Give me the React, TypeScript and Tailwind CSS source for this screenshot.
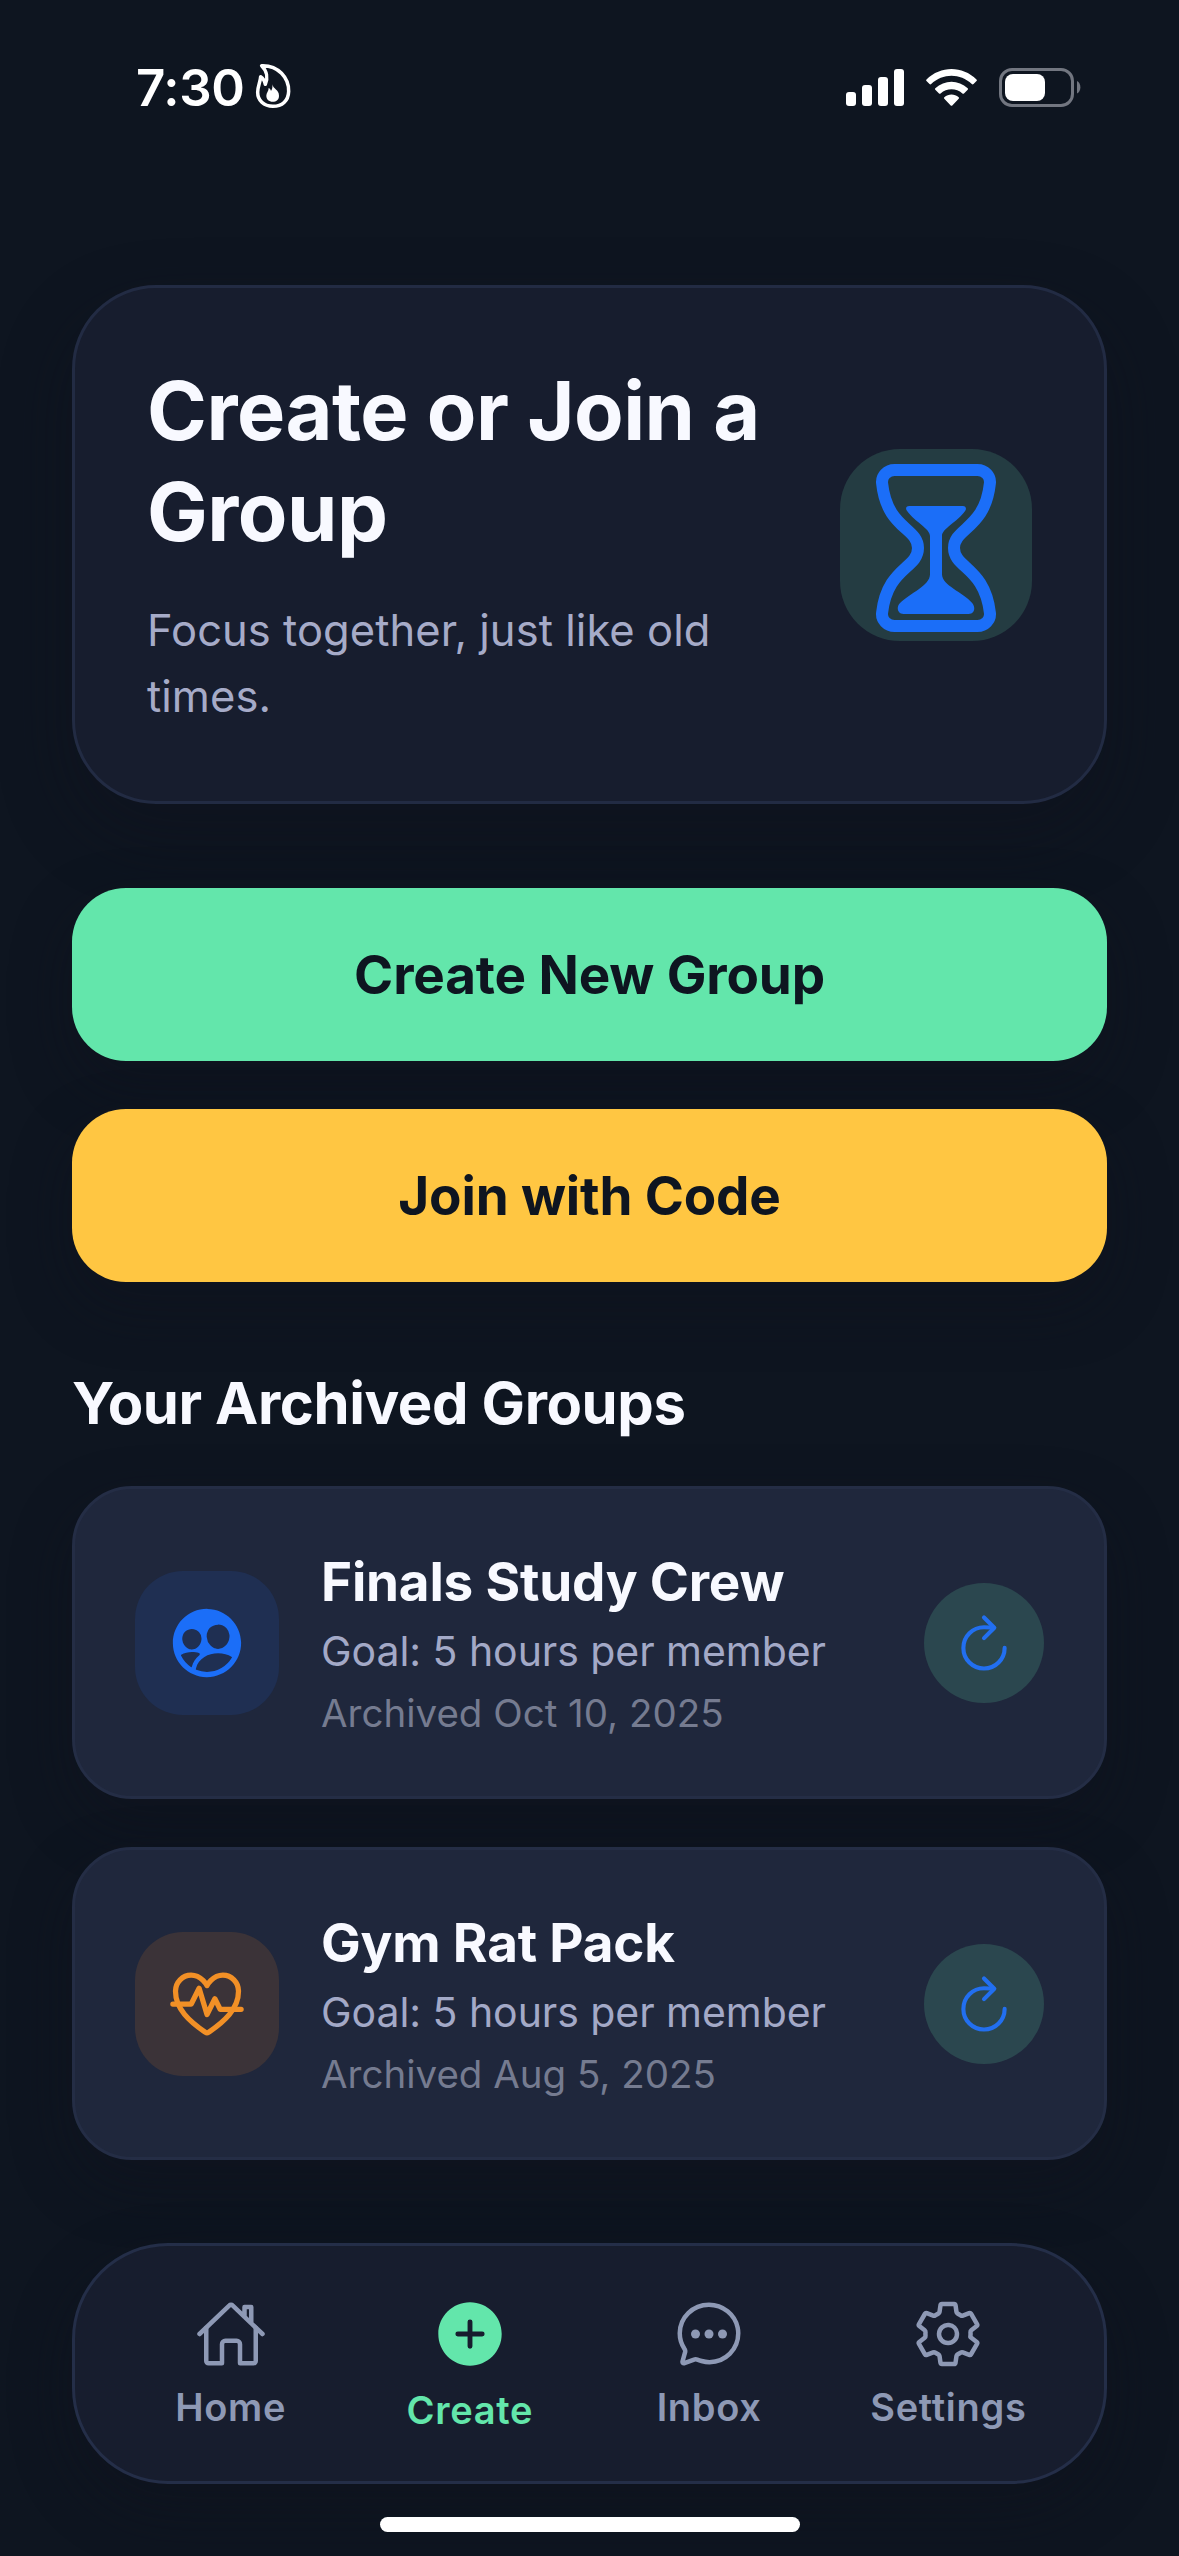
import React from 'react';
import {
  IoAddCircle,
  IoChatbubbleEllipsesOutline,
  IoFitnessOutline,
  IoHomeOutline,
  IoHourglassOutline,
  IoPeopleCircle,
  IoRefreshOutline,
  IoSettingsOutline,
} from 'react-icons/io5';

const StatusBar: React.FC = () => (
  <div className="flex h-[177px] items-start justify-between pl-[136px] pr-[98px] pt-[60px] text-white">
    <div className="flex items-start">
      <span className="text-[51px] leading-[56px] font-semibold tracking-[-0.4px]">7:30</span>
      <svg viewBox="465 70 108 138" className="ml-[11px] mt-[3px] h-[46px] w-[36px]" fill="none">
        <path
          d="M485 78 C535 76 567 115 566 155 C565 184 546 200 519 200 C491 200 473 182 473 158 C473 140 481 128 482 111 C489 115 494 124 496 134 C504 116 501 94 485 78 Z"
          stroke="currentColor"
          strokeWidth="10.5"
          strokeLinejoin="round"
        />
        <path
          d="M517 134 C519 148 537 150 537 168 C537 180 529 186 518 186 C507 186 499 179 499 168 C499 159 506 155 506 145 C510 147 512 150 513 154 C517 149 518 142 517 134 Z"
          fill="currentColor"
        />
      </svg>
    </div>
    <div className="mt-[8px] flex items-start">
      <svg viewBox="0 0 58 38" className="mt-[1px] h-[38px] w-[58px]" fill="currentColor">
        <rect x="0" y="23" width="10" height="14" rx="3" />
        <rect x="16" y="16" width="10" height="21" rx="3" />
        <rect x="32" y="8" width="10" height="29" rx="3" />
        <rect x="48" y="0" width="10" height="37" rx="3" />
      </svg>
      <svg viewBox="0 0 52 38" className="ml-[22px] mt-[1px] h-[38px] w-[52px]" fill="currentColor">
        <path d="M0.5 10.5 C14.5 -3.5 36.5 -3.5 50.5 10.5 C51 11 51 11.5 50.5 12 L47.5 15 C47 15.5 46.3 15.5 45.8 15 C34.3 4 16.7 4 5.2 15 C4.7 15.5 4 15.5 3.5 15 L0.5 12 C0 11.5 0 11 0.5 10.5 Z" />
        <path d="M9.3 19.3 C18.5 10.6 32.5 10.6 41.7 19.3 C42.2 19.8 42.2 20.3 41.7 20.8 L38 24.4 C37.5 24.9 36.9 24.9 36.4 24.4 C30.3 19 20.7 19 14.6 24.4 C14.1 24.9 13.5 24.9 13 24.4 L9.3 20.8 C8.8 20.3 8.8 19.8 9.3 19.3 Z" />
        <path d="M18.3 28.3 C22.6 24.6 28.4 24.6 32.7 28.3 C33.2 28.8 33.2 29.3 32.7 29.8 L26.3 36.4 C25.8 36.9 25.2 36.9 24.7 36.4 L18.3 29.8 C17.8 29.3 17.8 28.8 18.3 28.3 Z" />
      </svg>
      <svg viewBox="0 0 82 39" className="ml-[21px] h-[39px] w-[82px]">
        <rect x="1.5" y="1.5" width="72" height="36" rx="11.5" fill="none" stroke="#727680" strokeWidth="3" />
        <rect x="6" y="6" width="40" height="27" rx="8" fill="#fff" />
        <path d="M78 13 C82.5 15 82.5 23.5 78 25.5 Z" fill="#727680" />
      </svg>
    </div>
  </div>
);

interface GroupCardProps {
  icon: React.ReactNode;
  tileClass: string;
  name: string;
  goal: string;
  archived: string;
}

const GroupCard: React.FC<GroupCardProps> = ({ icon, tileClass, name, goal, archived }) => (
  <div className="flex h-[313px] items-center rounded-[60px] border-[3px] border-[#242d45] bg-[#1f273c] px-[60px] shadow-[0_24px_60px_rgba(16,17,28,0.45)]">
    <div className={`flex size-[144px] items-center justify-center rounded-[48px] ${tileClass}`}>{icon}</div>
    <div className="ml-[42px] flex-1 pt-[2px] whitespace-nowrap">
      <div className="text-[53px] leading-[66px] font-bold tracking-[-0.2px] text-[#f8f9ff]">{name}</div>
      <div className="mt-[9px] text-[41px] leading-[54px] tracking-[-0.05px] text-[#a3a9c7]">{goal}</div>
      <div className="mt-[10px] text-[38.5px] leading-[50px] text-[#757b90]">{archived}</div>
    </div>
    <button className="flex size-[120px] items-center justify-center rounded-full bg-[#2b474f]">
      <IoRefreshOutline className="size-[66px] text-[#226ff0]" />
    </button>
  </div>
);

interface TabProps {
  icon: React.ReactNode;
  label: string;
  active?: boolean;
}

const Tab: React.FC<TabProps> = ({ icon, label, active }) => (
  <div className={`flex flex-1 flex-col items-center ${active ? 'text-[#63e6ab]' : 'text-[#8e99b5]'}`}>
    {icon}
    <span className="mt-[13px] text-[38px] leading-[48px] font-semibold tracking-[0.7px]">{label}</span>
  </div>
);

const App: React.FC = () => {
  return (
    <div className="flex h-[2556px] w-[1179px] flex-col overflow-hidden bg-[#0e1520] font-['Inter','Liberation_Sans',sans-serif]">
      <StatusBar />

      <main className="mt-[108px] flex flex-col px-[72px]">
        {/* Hero */}
        <section className="flex h-[519px] items-center justify-between rounded-[84px] border-[3px] border-[#222b43] bg-[#171d2e] px-[72px] shadow-[0_30px_70px_rgba(16,17,28,0.45)]">
          <div className="whitespace-nowrap">
            <h1 className="text-[81px] leading-[101px] font-bold tracking-[-0.5px] text-[#f8f9ff]">
              Create or Join a
              <br />
              Group
            </h1>
            <p className="mt-[34px] text-[43.5px] leading-[66px] tracking-[0.05px] text-[#a6abc8]">
              Focus together, just like old
              <br />
              times.
            </p>
          </div>
          <div className="flex size-[192px] items-center justify-center rounded-[60px] bg-[#243c42]">
            <IoHourglassOutline className="mt-[6px] size-[192px] shrink-0 text-[#1b6ef8]" />
          </div>
        </section>

        {/* Actions */}
        <div className="mt-[84px] flex flex-col gap-[48px] text-[53px] font-bold tracking-[-0.15px] text-[#0e1520]">
          <button className="h-[173px] rounded-[54px] bg-[#63e6ab] pt-[2px] shadow-[0_24px_60px_rgba(16,17,28,0.45)]">Create New Group</button>
          <button className="h-[173px] rounded-[54px] bg-[#ffc642] pt-[2px] shadow-[0_24px_60px_rgba(16,17,28,0.45)]">Join with Code</button>
        </div>

        {/* Archived groups */}
        <h2 className="mt-[85px] text-[58px] leading-[72px] font-bold tracking-[-0.4px] text-[#f8f9ff]">Your Archived Groups</h2>
        <div className="mt-[47px] flex flex-col gap-[48px]">
          <GroupCard
            icon={<IoPeopleCircle className="size-[84px] text-[#1b6ef8]" />}
            tileClass="bg-[#1f2f52]"
            name="Finals Study Crew"
            goal="Goal: 5 hours per member"
            archived="Archived Oct 10, 2025"
          />
          <GroupCard
            icon={<IoFitnessOutline className="size-[84px] text-[#f29026]" />}
            tileClass="bg-[#3b3338]"
            name="Gym Rat Pack"
            goal="Goal: 5 hours per member"
            archived="Archived Aug 5, 2025"
          />
        </div>
      </main>

      {/* Tab bar */}
      <nav className="mx-[72px] mt-[83px] flex h-[241px] shrink-0 items-center rounded-[96px] border-[3px] border-[#242e48] bg-[#171d2e] px-[36px] pt-[2px] shadow-[0_24px_60px_rgba(16,17,28,0.45)]">
        <Tab icon={<IoHomeOutline className="size-[72px]" />} label="Home" />
        <Tab icon={<IoAddCircle className="size-[78px]" />} label="Create" active />
        <Tab icon={<IoChatbubbleEllipsesOutline className="size-[72px]" />} label="Inbox" />
        <Tab icon={<IoSettingsOutline className="size-[72px]" />} label="Settings" />
      </nav>

      <div className="mx-auto mt-[33px] h-[15px] w-[420px] shrink-0 rounded-full bg-white" />
    </div>
  );
};

export default App;
